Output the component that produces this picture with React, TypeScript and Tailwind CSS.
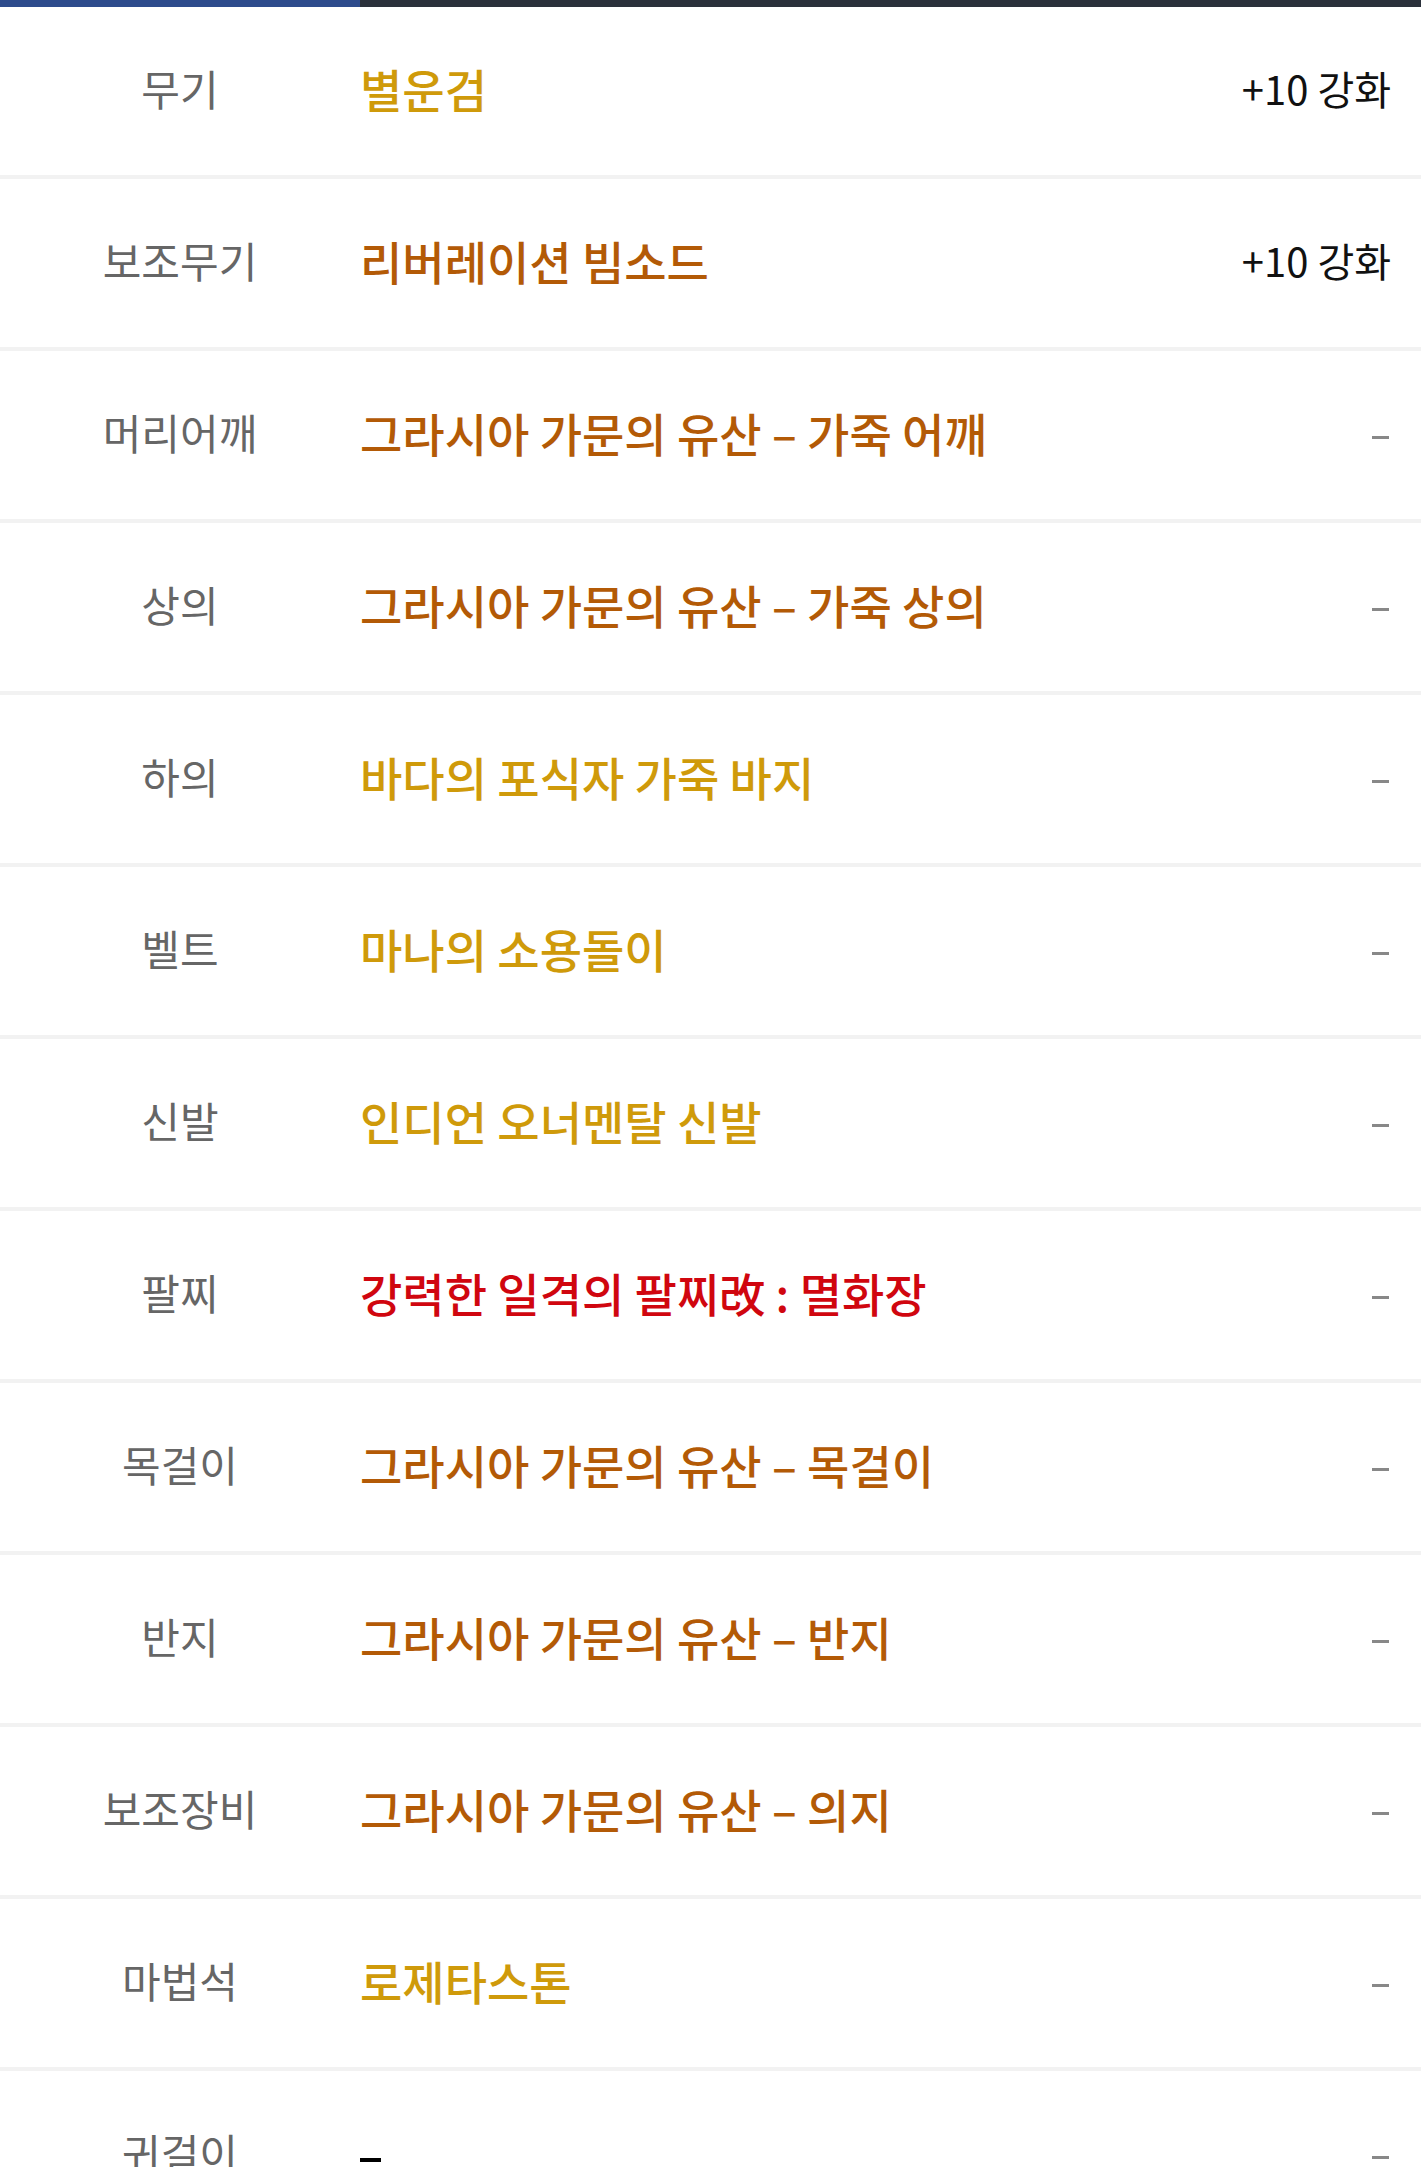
import React from "react";

type Row = { label: string; name: string; color: string; right: string };

const GOLD = "text-[#cf9a0a]";
const BROWN = "text-[#b35a06]";
const RED = "text-[#d0060f]";
const BLACK = "text-[#111111]";

const rows: Row[] = [
  { label: "무기", name: "별운검", color: GOLD, right: "+10 강화" },
  { label: "보조무기", name: "리버레이션 빔소드", color: BROWN, right: "+10 강화" },
  { label: "머리어깨", name: "그라시아 가문의 유산 – 가죽 어깨", color: BROWN, right: "-" },
  { label: "상의", name: "그라시아 가문의 유산 – 가죽 상의", color: BROWN, right: "-" },
  { label: "하의", name: "바다의 포식자 가죽 바지", color: GOLD, right: "-" },
  { label: "벨트", name: "마나의 소용돌이", color: GOLD, right: "-" },
  { label: "신발", name: "인디언 오너멘탈 신발", color: GOLD, right: "-" },
  { label: "팔찌", name: "강력한 일격의 팔찌改 : 멸화장", color: RED, right: "-" },
  { label: "목걸이", name: "그라시아 가문의 유산 – 목걸이", color: BROWN, right: "-" },
  { label: "반지", name: "그라시아 가문의 유산 – 반지", color: BROWN, right: "-" },
  { label: "보조장비", name: "그라시아 가문의 유산 – 의지", color: BROWN, right: "-" },
  { label: "마법석", name: "로제타스톤", color: GOLD, right: "-" },
  { label: "귀걸이", name: "-", color: BLACK, right: "-" },
];

export default function App() {
  return (
    <div
      className="w-full bg-white"
      style={{ fontFamily: '"Noto Sans CJK KR", "Noto Sans", sans-serif' }}
    >
      <div className="flex h-[7px] w-full">
        <div className="w-[360px] bg-[#2d4b8c]" />
        <div className="flex-1 bg-[#2b313b]" />
      </div>
      {rows.map((r, i) => (
        <div
          key={i}
          className="flex h-[172px] items-center border-b-4 border-[#f2f2f2]"
        >
          <div className="w-[360px] shrink-0 pb-[6px] text-center text-[42px] leading-none text-[#666666]">
            {r.label}
          </div>
          <div
            className={`flex-1 pb-[6px] text-[46px] font-medium leading-none ${r.color}`}
          >
            {r.name === "-" ? (
              <span className="inline-block h-[4px] w-[21px] bg-black align-middle" />
            ) : (
              r.name
            )}
          </div>
          <div className="pr-[30px] text-right">
            {r.right === "-" ? (
              <span className="mr-[2px] inline-block h-[3px] w-[17px] bg-[#888888] align-middle" />
            ) : (
              <span className="block pb-[6px] text-[40px] leading-none text-[#111111]">
                {r.right}
              </span>
            )}
          </div>
        </div>
      ))}
    </div>
  );
}
